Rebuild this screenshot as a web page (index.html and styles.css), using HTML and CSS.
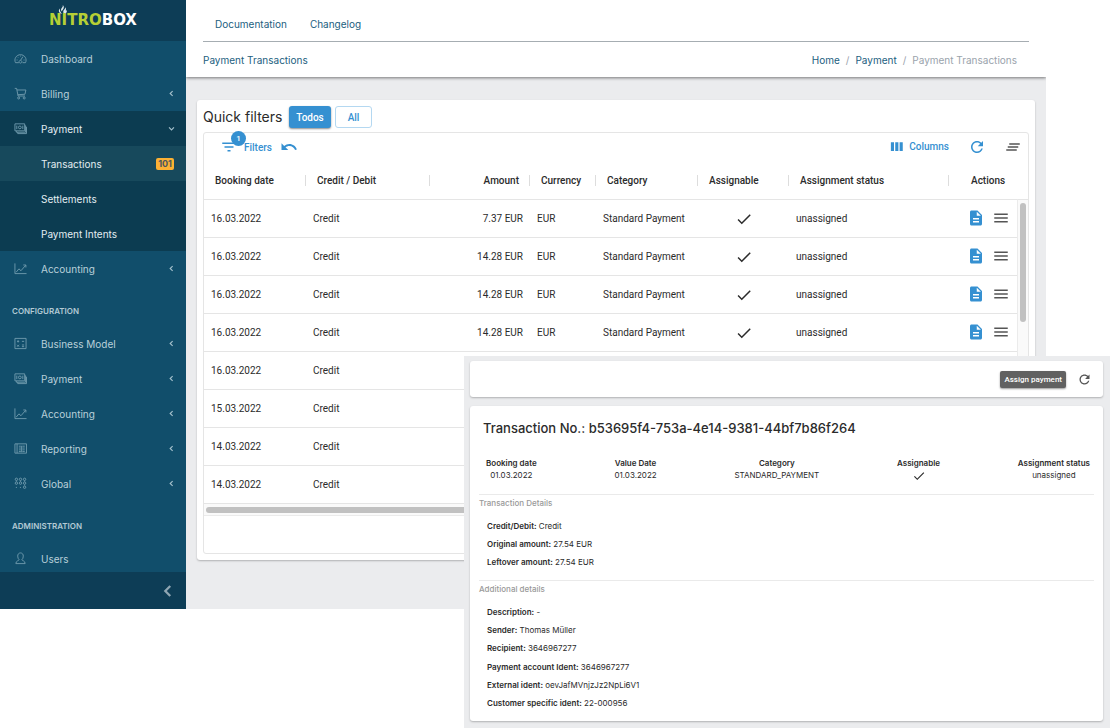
FILE: index.html
```html
<!DOCTYPE html>
<html lang="en">
<head>
<meta charset="utf-8">
<title>Nitrobox – Payment Transactions</title>
<link rel="stylesheet" href="styles.css">
</head>
<body>
<svg class="defs" aria-hidden="true">
  <symbol id="i-dash" viewBox="0 0 14 14"><path d="M1.6 11.5A6 6 0 1 1 12.4 11.5H9.2M1.6 11.5H5.2M2.8 8.6h1M3.8 5.3l.6.6M7 3.9v.9M11.3 8.6h-1M7.2 8.8 9.6 5M7 9a1.5 1.5 0 1 1-.1 0"/></symbol>
  <symbol id="i-cart" viewBox="0 0 14 14"><path d="M.8 1.5h2l1.6 8.2h7.4M3.2 3.2h9.6l-1 4.6-7.6.5"/><circle cx="5" cy="11.8" r="1.1"/><circle cx="11" cy="11.8" r="1.1"/></symbol>
  <symbol id="i-cash" viewBox="0 0 14 14"><path d="M1 2h10.5v7.5H1zM11.5 4h1v7H2.5V9.5M12.5 5.5h1v7H4V11M3 3.9v3.8M9.5 3.9v3.8"/><circle cx="6.3" cy="5.8" r="1.5"/></symbol>
  <symbol id="i-chart" viewBox="0 0 14 14"><path d="M1 1.5v11h12.5M2.3 11l3-3.6 2.2 2L12.6 3.5M10 3.2h2.8v2.7"/></symbol>
  <symbol id="i-calc" viewBox="0 0 14 14"><path d="M1 1.5h12v11H1zM3.2 4.7h2.4M4.4 3.5v2.4M8.5 4.7h2.4M3.4 8.4l2 2M5.4 8.4l-2 2M8.5 8.6h2.4M8.5 10.4h2.4"/></symbol>
  <symbol id="i-report" viewBox="0 0 14 14"><path d="M1 2h12.5v10H1zM3.3 2v10M5.2 4.5h2.2M5.2 6.5h2.2M5.2 8.5h2.2M5.2 10.3h2.2M9 4.5h2.6M9 6.5h2.6M9 8.5h2.6M9 10.3h2.6M8.2 4v7"/></symbol>
  <symbol id="i-global" viewBox="0 0 14 14"><circle cx="2.6" cy="2.5" r="1.3"/><circle cx="7" cy="2.5" r="1.3"/><circle cx="11.4" cy="2.5" r="1.3"/><circle cx="2.6" cy="6.6" r="1.3"/><circle cx="7" cy="6.6" r="1.3"/><circle cx="11.4" cy="6.6" r="1.3"/><circle cx="11.4" cy="11" r="1.3"/><path d="M2 11.2h1.2M6.4 11.2h1.2M2.6 4v1M7 4v1M11.4 4v1M11.4 8.2v1"/></symbol>
  <symbol id="i-user" viewBox="0 0 14 14"><path d="M7 1c2 0 3 1.5 3 3.400 0 1.800-.6 3.200-1.600 4 .4 1 3.600 1 3.600 4.100H2c0-3.100 3.200-3.100 3.600-4.100C4.600 7.600 4 6.200 4 4.400 4 2.500 5 1 7 1z"/></symbol>
  <symbol id="i-left" viewBox="0 0 8 8"><path d="M5 1.800 2.800 4 5 6.200"/></symbol>
  <symbol id="i-down" viewBox="0 0 8 8"><path d="M1.800 3 4 5.200 6.200 3"/></symbol>
  <symbol id="i-filter" viewBox="0 0 24 24"><path d="M10 18h4v-2h-4v2zM3 6v2h18V6H3zm3 7h12v-2H6v2z"/></symbol>
  <symbol id="i-undo" viewBox="0 0 24 24"><path d="M12.500 8c-2.650 0-5.050.990-6.900 2.600L2 7v9h9l-3.620-3.620c1.390-1.160 3.160-1.880 5.120-1.880 3.540 0 6.550 2.310 7.600 5.500l2.370-.780C21.080 11.030 17.150 8 12.500 8z"/></symbol>
  <symbol id="i-cols" viewBox="0 0 24 24"><path d="M3 5h5v14H3zM10 5h5v14h-5zM17 5h5v14h-5z"/></symbol>
  <symbol id="i-refresh" viewBox="0 0 24 24"><path d="M17.650 6.350C16.200 4.900 14.210 4 12 4c-4.420 0-7.990 3.580-7.990 8s3.570 8 7.990 8c3.730 0 6.840-2.550 7.730-6h-2.080c-.820 2.330-3.040 4-5.650 4-3.310 0-6-2.690-6-6s2.690-6 6-6c1.660 0 3.140.690 4.220 1.780L13 11h7V4l-2.350 2.350z"/></symbol>
  <symbol id="i-clear" viewBox="0 0 24 24"><path d="M5 13h14v-2H5v2zm-2 4h14v-2H3v2zM7 7v2h14V7H7z"/></symbol>
  <symbol id="i-doc" viewBox="0 0 24 24"><path d="M14 2H6c-1.100 0-2 .900-2 2v16c0 1.100.900 2 2 2h12c1.100 0 2-.900 2-2V8l-6-6zm2 16H8v-2h8v2zm0-4H8v-2h8v2zm-3-5V3.500L18.500 9H13z"/></symbol>
  <symbol id="i-menu" viewBox="0 0 24 24"><path d="M3 18h18v-2H3v2zm0-5h18v-2H3v2zm0-7v2h18V6H3z"/></symbol>
  <symbol id="i-check" viewBox="0 0 24 24"><path d="M9 16.170 4.830 12l-1.420 1.410L9 19 21 7l-1.410-1.410z"/></symbol>
</svg>

<div class="app">
  <aside class="sidebar">
    <div class="brand">
      <svg class="flame" viewBox="0 0 10 10"><path d="M4.600 0c.8 1.600-.4 2.400-1.200 3.600C2.400 5 2.800 6.200 3.800 7.200c0-1.600 1.200-2.200 1.800-3.400C6.200 2.400 6 1 4.600 0zM7.600 2.600C7.800 4.600 6 5 5.400 6.600 5 8 5.600 9 6.600 9.800 9 9.400 10 7.400 8.800 5.600c-.2.400-.4.600-.8.600C8.600 5.200 8.400 3.600 7.600 2.600zM1.400 4C-.4 6 .2 9 3.800 9.900 2 8 1.400 6.400 1.400 4z"/></svg>
      <span class="word">NITRO<span class="word-end">BOX</span></span>
    </div>
    <nav class="menu">
      <a class="item" href="#"><svg class="ico"><use href="#i-dash"/></svg><span>Dashboard</span></a>
      <a class="item" href="#"><svg class="ico"><use href="#i-cart"/></svg><span>Billing</span><svg class="chev"><use href="#i-left"/></svg></a>
      <div class="open">
        <a class="item" href="#"><svg class="ico"><use href="#i-cash"/></svg><span>Payment</span><svg class="chev"><use href="#i-down"/></svg></a>
        <a class="item sub current" href="#"><span>Transactions</span><span class="count">101</span></a>
        <a class="item sub" href="#"><span>Settlements</span></a>
        <a class="item sub" href="#"><span>Payment Intents</span></a>
      </div>
      <a class="item" href="#"><svg class="ico"><use href="#i-chart"/></svg><span>Accounting</span><svg class="chev"><use href="#i-left"/></svg></a>
      <h2 class="group">CONFIGURATION</h2>
      <a class="item" href="#"><svg class="ico"><use href="#i-calc"/></svg><span>Business Model</span><svg class="chev"><use href="#i-left"/></svg></a>
      <a class="item" href="#"><svg class="ico"><use href="#i-cash"/></svg><span>Payment</span><svg class="chev"><use href="#i-left"/></svg></a>
      <a class="item" href="#"><svg class="ico"><use href="#i-chart"/></svg><span>Accounting</span><svg class="chev"><use href="#i-left"/></svg></a>
      <a class="item" href="#"><svg class="ico"><use href="#i-report"/></svg><span>Reporting</span><svg class="chev"><use href="#i-left"/></svg></a>
      <a class="item" href="#"><svg class="ico"><use href="#i-global"/></svg><span>Global</span><svg class="chev"><use href="#i-left"/></svg></a>
      <h2 class="group">ADMINISTRATION</h2>
      <a class="item" href="#"><svg class="ico"><use href="#i-user"/></svg><span>Users</span></a>
    </nav>
    <button class="collapse" aria-label="Collapse menu"><svg class="collapse-ico"><use href="#i-left"/></svg></button>
  </aside>

  <div class="main">
    <header class="top">
      <nav class="links"><a href="#">Documentation</a><a href="#">Changelog</a></nav>
      <div class="crumb-row">
        <span class="page-name">Payment Transactions</span>
        <nav class="crumbs" aria-label="Breadcrumb"><a href="#">Home</a><span>/</span><a href="#">Payment</a><span>/</span><span>Payment Transactions</span></nav>
      </div>
    </header>
    <main class="content">
      <section class="card list-card">
        <div class="quick">
          <h1>Quick filters</h1>
          <button class="btn solid">Todos</button>
          <button class="btn outline">All</button>
        </div>
        <div class="grid-box">
          <div class="toolbar">
            <button class="tool filters"><span class="filter-ico"><svg class="mi"><use href="#i-filter"/></svg><span class="badge">1</span></span>Filters</button>
            <button class="tool" aria-label="Reset filters"><svg class="mi"><use href="#i-undo"/></svg></button>
            <button class="tool columns"><svg class="mi small"><use href="#i-cols"/></svg>Columns</button>
            <button class="tool" aria-label="Refresh"><svg class="mi"><use href="#i-refresh"/></svg></button>
            <button class="tool gray" aria-label="Density"><svg class="mi"><use href="#i-clear"/></svg></button>
          </div>
          <div class="table-area">
            <table class="grid">
              <colgroup><col class="c-date"><col class="c-type"><col class="c-amount"><col class="c-cur"><col class="c-cat"><col class="c-assign"><col class="c-status"><col></colgroup>
              <thead><tr><th>Booking date</th><th>Credit / Debit</th><th class="num">Amount</th><th>Currency</th><th>Category</th><th>Assignable</th><th>Assignment status</th><th class="last">Actions</th></tr></thead>
              <tbody>
                <tr><td>16.03.2022</td><td>Credit</td><td class="num">7.37 EUR</td><td>EUR</td><td>Standard Payment</td><td class="mid"><svg class="mi"><use href="#i-check"/></svg></td><td>unassigned</td><td class="acts"><button class="tool" aria-label="Details"><svg class="mi"><use href="#i-doc"/></svg></button><button class="tool gray" aria-label="Menu"><svg class="mi"><use href="#i-menu"/></svg></button></td></tr>
                <tr><td>16.03.2022</td><td>Credit</td><td class="num">14.28 EUR</td><td>EUR</td><td>Standard Payment</td><td class="mid"><svg class="mi"><use href="#i-check"/></svg></td><td>unassigned</td><td class="acts"><button class="tool" aria-label="Details"><svg class="mi"><use href="#i-doc"/></svg></button><button class="tool gray" aria-label="Menu"><svg class="mi"><use href="#i-menu"/></svg></button></td></tr>
                <tr><td>16.03.2022</td><td>Credit</td><td class="num">14.28 EUR</td><td>EUR</td><td>Standard Payment</td><td class="mid"><svg class="mi"><use href="#i-check"/></svg></td><td>unassigned</td><td class="acts"><button class="tool" aria-label="Details"><svg class="mi"><use href="#i-doc"/></svg></button><button class="tool gray" aria-label="Menu"><svg class="mi"><use href="#i-menu"/></svg></button></td></tr>
                <tr><td>16.03.2022</td><td>Credit</td><td class="num">14.28 EUR</td><td>EUR</td><td>Standard Payment</td><td class="mid"><svg class="mi"><use href="#i-check"/></svg></td><td>unassigned</td><td class="acts"><button class="tool" aria-label="Details"><svg class="mi"><use href="#i-doc"/></svg></button><button class="tool gray" aria-label="Menu"><svg class="mi"><use href="#i-menu"/></svg></button></td></tr>
                <tr><td>16.03.2022</td><td>Credit</td><td></td><td></td><td></td><td></td><td></td><td></td></tr>
                <tr><td>15.03.2022</td><td>Credit</td><td></td><td></td><td></td><td></td><td></td><td></td></tr>
                <tr><td>14.03.2022</td><td>Credit</td><td></td><td></td><td></td><td></td><td></td><td></td></tr>
                <tr><td>14.03.2022</td><td>Credit</td><td></td><td></td><td></td><td></td><td></td><td></td></tr>
              </tbody>
            </table>
            <div class="vscroll"><div class="vtrack"><div class="vthumb"></div></div></div>
          </div>
          <div class="htrack"><div class="hthumb"></div></div>
          <div class="grid-foot"></div>
        </div>
      </section>
    </main>
  </div>
</div>

<section class="detail">
  <div class="card detail-bar">
    <button class="assign">Assign payment</button>
    <button class="tool gray" aria-label="Refresh transaction"><svg class="mi mid-size"><use href="#i-refresh"/></svg></button>
  </div>
  <div class="card detail-card">
    <h2 class="detail-title">Transaction No.: b53695f4-753a-4e14-9381-44bf7b86f264</h2>
    <dl class="facts">
      <div><dt>Booking date</dt><dd>01.03.2022</dd></div>
      <div><dt>Value Date</dt><dd>01.03.2022</dd></div>
      <div><dt>Category</dt><dd>STANDARD_PAYMENT</dd></div>
      <div><dt>Assignable</dt><dd><svg class="mi fact-check"><use href="#i-check"/></svg></dd></div>
      <div><dt>Assignment status</dt><dd>unassigned</dd></div>
    </dl>
    <h3 class="legend">Transaction Details</h3>
    <dl class="rows">
      <div><dt>Credit/Debit:</dt> <dd>Credit</dd></div>
      <div><dt>Original amount:</dt> <dd>27.54 EUR</dd></div>
      <div><dt>Leftover amount:</dt> <dd>27.54 EUR</dd></div>
    </dl>
    <h3 class="legend">Additional details</h3>
    <dl class="rows fill">
      <div><dt>Description:</dt> <dd>-</dd></div>
      <div><dt>Sender:</dt> <dd>Thomas Müller</dd></div>
      <div><dt>Recipient:</dt> <dd>3646967277</dd></div>
      <div><dt>Payment account Ident:</dt> <dd>3646967277</dd></div>
      <div><dt>External ident:</dt> <dd>oevJafMVnjzJz2NpLi6V1</dd></div>
      <div><dt>Customer specific ident:</dt> <dd>22-000956</dd></div>
    </dl>
  </div>
</section>
</body>
</html>
```
FILE: styles.css
```css
* { box-sizing: border-box; }
body {
  margin: 0;
  position: relative;
  min-height: 100vh;
  background: #fff;
  color: #2b2b2b;
  font-family: Inter, "Liberation Sans", sans-serif;
  font-size: 10px;
}
a { color: inherit; text-decoration: none; }
h1, h2, h3, dl, dd { margin: 0; }
button { font: inherit; border: 0; background: none; padding: 0; }
.defs { position: absolute; width: 0; height: 0; }
.card { background: #fff; border-radius: 3px; box-shadow: 0 1px 2px rgba(0, 0, 0, .25); }

.app { display: flex; margin-right: 64px; }

/* Sidebar */
.sidebar {
  width: 186px;
  flex: none;
  display: flex;
  flex-direction: column;
  background: #114e6b;
  color: #b9d0da;
}
.brand {
  height: 41px;
  display: flex;
  flex-direction: column;
  align-items: center;
  padding-top: 5px;
  background: #0d3d56;
}
.flame { width: 10px; height: 9px; flex: none; margin-right: 61px; fill: #dfe9ee; }
.word {
  color: #b6cf35;
  font: bold 15px/13px "DejaVu Sans", sans-serif;
}
.word-end { color: #fff; }
.menu { flex: 1; contain: size; overflow: hidden; }
.item {
  height: 35px;
  display: flex;
  align-items: center;
  gap: 14px;
  padding: 0 12px 0 14px;
}
.ico { width: 13px; height: 13px; fill: none; stroke: #6f9aad; stroke-width: 1; }
.chev { width: 9px; height: 9px; margin-left: auto; margin-right: -2px; fill: none; stroke: #a5c0cc; stroke-width: 1; }
.open { background: #0c3c51; color: #e3edf1; }
.sub { padding-left: 41px; }
.current { background: #17495c; }
.count {
  margin-left: auto;
  padding: 0 2px;
  border-radius: 2px;
  background: #fbb034;
  color: #4a5560;
  font-size: 9px;
  font-weight: 700;
  line-height: 12px;
}
.group {
  padding: 20px 12px 10px;
  color: #b3cad5;
  font-size: 8px;
  font-weight: 600;
  line-height: 10px;
}
.collapse {
  height: 37px;
  display: flex;
  align-items: center;
  justify-content: flex-end;
  padding-right: 9px;
  background: #0d3d56;
}
.collapse-ico { width: 18px; height: 18px; fill: none; stroke: #8fa6b3; stroke-width: 1; }

/* Header */
.main { flex: 1; min-width: 0; display: flex; flex-direction: column; overflow: hidden; background: #ebecee; }
.top {
  position: relative;
  padding: 0 17px;
  background: #fff;
  color: #226080;
  box-shadow: 0 1px 3px rgba(0, 0, 0, .5);
}
.links {
  height: 42px;
  display: flex;
  align-items: center;
  gap: 23px;
  padding: 6px 12px 0;
  border-bottom: 1px solid #a6adb2;
}
.crumb-row { height: 35px; display: flex; align-items: center; justify-content: space-between; }
.crumbs { display: flex; gap: 6px; padding-right: 12px; color: #9aa3ac; }
.crumbs a { color: #226080; }

/* Transaction list */
.content { padding: 23px 11px 49px; font-family: Roboto, sans-serif; }
.list-card { padding: 5px 6px 6px; }
.quick { display: flex; align-items: center; gap: 4px; height: 24px; }
h1 { min-width: 82px; font: 400 14px/24px Inter, sans-serif; }
.btn { height: 22px; border-radius: 3px; font-size: 10px; font-weight: 500; }
.solid { width: 42px; background: #3590d1; color: #fff; box-shadow: 0 1px 2px rgba(0, 0, 0, .45); }
.outline { width: 37px; border: 1px solid #b4d8f1; color: #3590d1; }
.grid-box { margin-top: 3px; border: 1px solid #e5e5e5; border-radius: 3px; }
.toolbar { height: 28px; display: flex; align-items: center; gap: 8px; padding: 0 6px 0 16px; }
.tool { display: inline-flex; align-items: center; color: #3590d1; font-size: 10px; font-weight: 500; }
.gray { color: #555; }
.mi { display: block; width: 18px; height: 18px; fill: currentColor; }
.small { width: 15px; height: 15px; }
.filters { gap: 6px; }
.filter-ico { position: relative; }
.badge {
  position: absolute;
  top: -7px;
  left: 11px;
  width: 15px;
  height: 15px;
  border-radius: 50%;
  background: #3590d1;
  color: #fff;
  font-size: 8px;
  line-height: 15px;
  text-align: center;
}
.columns { gap: 5px; margin-left: auto; margin-right: 11px; padding-bottom: 2px; }
.columns + .tool { margin-right: 10px; }
.table-area { display: flex; }
.grid { flex: 1; width: 100%; table-layout: fixed; border-collapse: separate; border-spacing: 0; }
.c-date, .c-cat { width: 102px; }
.c-type { width: 124px; }
.c-amount { width: 100px; }
.c-cur { width: 66px; }
.c-assign { width: 91px; }
.c-status { width: 160px; }
th {
  height: 39px;
  padding: 0 11px;
  border-bottom: 1px solid #e5e5e5;
  background: linear-gradient(#ddd, #ddd) right center / 1px 11px no-repeat;
  font-size: 10px;
  font-weight: 500;
  text-align: left;
  white-space: nowrap;
}
.last { background: none; padding: 0 0 0 22px; }
td { height: 38px; padding: 0 7px; border-bottom: 1px solid #e5e5e5; font-size: 10px; white-space: nowrap; }
.num { text-align: right; }
.mid .mi { margin: 0 auto; }
.acts { padding: 0 0 0 18px; }
.acts .tool + .tool { margin-left: 7px; }
.vscroll { width: 11px; padding-top: 38px; }
.vtrack { height: 100%; padding: 3px 2px; border-top: 1px solid #e5e5e5; border-left: 1px solid #ebebeb; background: #fafafa; }
.vthumb { height: 119px; border-radius: 3px; background: #c1c1c1; }
.htrack { padding: 3px 2px 2px; border-bottom: 1px solid #ebebeb; background: #fafafa; }
.hthumb { width: 60%; height: 6px; border-radius: 3px; background: #c1c1c1; }
.grid-foot { height: 37px; }

/* Transaction detail window */
.detail {
  position: absolute;
  top: 356px;
  right: 0;
  bottom: 0;
  left: 464px;
  display: flex;
  flex-direction: column;
  gap: 9px;
  padding: 5px 7px 7px 6px;
  background: #ebecee;
  font-size: 8px;
}
.detail-bar { flex: none; display: flex; align-items: center; justify-content: flex-end; gap: 11px; height: 36px; padding: 0 11px; }
.assign {
  height: 17px;
  padding: 0 4px;
  border-radius: 2px;
  background: #616161;
  color: #fff;
  font: 500 8px/17px Roboto, sans-serif;
  box-shadow: 0 1px 2px rgba(0, 0, 0, .4);
}
.mid-size { width: 15px; height: 15px; }
.detail-card { flex: 1; display: flex; flex-direction: column; padding: 12px 9px 9px; }
.detail-title { padding: 0 4px; font-size: 13px; font-weight: 500; line-height: 20px; }
.facts { display: flex; justify-content: space-between; margin-top: 19px; padding: 0 4px 11px 7px; text-align: center; }
dt { font-weight: 600; }
.facts div { line-height: 12px; }
.fact-check { width: 14px; height: 14px; margin: 0 auto; }
.legend { padding-top: 2px; border-top: 1px solid #eaeaea; color: #999; font-size: 8px; font-weight: 500; line-height: 12px; }
.rows { display: flex; flex-direction: column; padding: 8px 8px 9px; line-height: 18px; }
.rows dt, .rows dd { display: inline; }
.fill { flex: 1; justify-content: space-between; padding-bottom: 0; }
```
